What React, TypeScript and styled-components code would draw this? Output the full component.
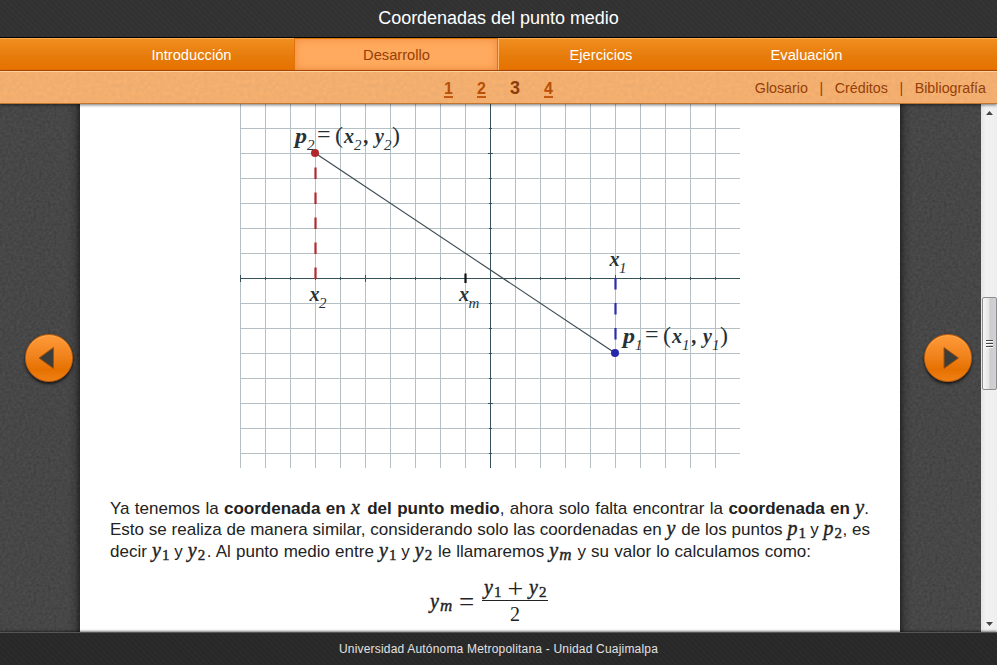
import React from 'react';
import styled, { createGlobalStyle } from 'styled-components';

const grain = (dark: string, freq: number, alpha: number) =>
  `url("data:image/svg+xml,${encodeURIComponent(
    `<svg xmlns='http://www.w3.org/2000/svg' width='128' height='128'><filter id='n' x='0' y='0' width='1' height='1' color-interpolation-filters='sRGB'><feTurbulence type='fractalNoise' baseFrequency='${freq}' numOctaves='2' stitchTiles='stitch'/><feColorMatrix values='0 0 0 0 ${dark} 0 0 0 0 ${dark} 0 0 0 0 ${dark} ${alpha} 0 0 0 0'/></filter><rect width='128' height='128' filter='url(#n)'/></svg>`,
  ).replace(/'/g, '%27').replace(/\(/g, '%28').replace(/\)/g, '%29')}")`;

const GlobalStyle = createGlobalStyle`
  * { box-sizing: border-box; }
  body { margin: 0; overflow: hidden; font-family: "Liberation Sans", Arial, sans-serif; }
`;

const Page = styled.div`
  display: grid;
  grid-template-rows: 38px 33px 33px 528px 33px;
  width: 997px;
  height: 665px;
  overflow: hidden;
`;

const Header = styled.header`
  display: flex;
  align-items: center;
  justify-content: center;
  padding-bottom: 1px;
  border-bottom: 1px solid #000;
  background: repeating-linear-gradient(45deg, #313131 0 2px, #343434 2px 4px);
  color: #fff;
`;

const Title = styled.h1`
  margin: 0;
  font-size: 18px;
  font-weight: 400;
  line-height: 20px;
  letter-spacing: -0.02px;
  white-space: nowrap;
`;

const Nav = styled.nav`
  display: grid;
  grid-template-columns: 206px 204px 205px 206px;
  justify-content: center;
  padding-right: 1px;
  border-top: 1px solid #ffab55;
  border-bottom: 1px solid #b94e05;
  background: linear-gradient(#f18e20, #e67c0b 55%, #e77200);
`;

const Tab = styled.a<{ $active?: boolean }>`
  display: flex;
  align-items: center;
  justify-content: center;
  padding: 1px 0 0 2px;
  font-size: 14.7px;
  color: ${(p) => (p.$active ? '#964006' : '#fff')};
  ${(p) =>
    p.$active &&
    `margin-top: -1px; border: 1px solid #df7408; border-bottom: 0;
     background: #ffaa5e; box-shadow: inset 0 0 8px #ed8a3d, 1px 0 0 #ffb872;`}
`;

const SubNav = styled.div`
  display: grid;
  grid-template-columns: 1fr auto 1fr;
  align-items: center;
  border-top: 1px solid #ffd19f;
  border-bottom: 1px solid #c17630;
  background: ${grain('0.4', 0.25, 0.14)}, #fdb470;
  position: relative;
  z-index: 2;
  box-shadow: 0 1px 3px rgba(0, 0, 0, 0.55);
`;

const Pager = styled.div`
  grid-column: 2;
  display: flex;
  align-items: baseline;
  gap: 24px;
  padding: 1px 0 0 0;
  font-weight: 700;
`;

const PageLink = styled.span<{ $current?: boolean }>`
  width: ${(p) => (p.$current ? '10px' : '9px')};
  font-size: ${(p) => (p.$current ? '18px' : '16px')};
  line-height: ${(p) => (p.$current ? '20px' : '15px')};
  color: ${(p) => (p.$current ? '#8c3c06' : '#b94e05')};
  border-bottom: ${(p) => (p.$current ? '0' : '2px solid #c35810')};
`;

const Links = styled.div`
  grid-column: 3;
  display: flex;
  justify-content: flex-end;
  gap: 11.6px;
  padding-right: 11px;
  font-size: 14.25px;
  color: #963f06;
`;

const Body = styled.main`
  display: grid;
  grid-template-columns: 80px 820px 81px 16px;
  min-height: 0;
  background: ${grain('0.1', 0.35, 0.4)}, #525252;
`;

const Side = styled.div<{ $right?: boolean }>`
  display: flex;
  justify-content: flex-start;
  padding-top: 230px;
  padding-left: ${(p) => (p.$right ? '24px' : '25px')};
  background: linear-gradient(${(p) => (p.$right ? 'to right' : 'to left')}, rgba(0, 0, 0, 0.45), rgba(0, 0, 0, 0.12) 5px, transparent 12px);
`;

const RoundButton = styled.button`
  width: 48px;
  height: 48px;
  padding: 0;
  border: 1px solid #bf5b08;
  border-radius: 50%;
  background: linear-gradient(#ff9a3a, #ef8119 50%, #e67100 75%, #f08015);
  box-shadow: 0 2px 3px rgba(0, 0, 0, 0.7), inset 0 1px 1px #ffac50;
  svg { display: block; }
`;

const Sheet = styled.article`
  display: flex;
  flex-direction: column;
  height: 528px;
  overflow: hidden;
  background: #fff;
  color: #222;
`;

const Graph = styled.svg`
  display: block;
  flex: none;
  margin-left: 160px;
  overflow: visible;
  text {
    font-family: "Liberation Serif", "Times New Roman", serif;
    font-style: italic;
    fill: #263238;
  }
`;

const Prose = styled.div`
  margin: 30px 0 0 30px;
  font-size: 17px;
`;

const Line = styled.p<{ $w: number; $h: number }>`
  width: ${(p) => p.$w}px;
  height: ${(p) => p.$h}px;
  margin: 0;
  line-height: 21px;
  text-align: justify;
  text-align-last: justify;
  white-space: nowrap;
`;

const MathText = styled.span<{ $w: number }>`
  display: inline-block;
  width: ${(p) => p.$w}px;
  line-height: 18px;
  font-family: "Liberation Serif", "Times New Roman", serif;
  font-size: 20px;
  font-style: italic;
  font-weight: 400;
  text-align: left;
  text-align-last: left;
  -webkit-text-stroke: 0.4px #222;
`;

const Sub = styled.span<{ $letter?: boolean }>`
  position: relative;
  top: 3px;
  margin-left: 1px;
  font-size: ${(p) => (p.$letter ? '17px' : '15px')};
  font-style: ${(p) => (p.$letter ? 'italic' : 'normal')};
`;

const Formula = styled.div`
  display: flex;
  align-items: center;
  margin: 15px 0 0 350px;
  font: italic 21px/22px "Liberation Serif", "Times New Roman", serif;
`;

const Equals = styled.span`
  width: 23px;
  font-size: 27px;
  font-style: normal;
`;

const Fraction = styled.div`
  display: flex;
  flex-direction: column;
  align-items: center;
  width: 66px;
`;

const Numerator = styled.div`
  display: flex;
  justify-content: space-between;
  width: 66px;
  height: 23px;
  margin-bottom: 2px;
  padding: 0 1px 0 2px;
  border-bottom: 1px solid #222;
`;

const Upright = styled.span<{ $size: number }>`
  font-style: normal;
  font-size: ${(p) => p.$size}px;
`;

const ScrollBar = styled.div`
  display: flex;
  flex-direction: column;
  align-items: center;
  padding: 7px 0 6px 0;
  background: linear-gradient(to right, #e4e4e4, #f2f2f2 5px, #eee);
  svg { display: block; margin-left: 1px; }
  svg:last-child { margin-top: auto; }
`;

const Thumb = styled.div`
  display: flex;
  flex-direction: column;
  align-items: center;
  justify-content: center;
  gap: 1px;
  align-self: flex-end;
  width: 15px;
  height: 93px;
  margin-top: 182px;
  border: 1px solid #8e8e8e;
  border-radius: 2px;
  background: linear-gradient(to right, #f6f6f6, #e4e4e4 48%, #cbcbd0 52%, #d2d2d5);
`;

const Grip = styled.i`
  width: 7px;
  height: 2px;
  border-top: 1px solid #444;
  border-bottom: 1px solid #fff;
`;

const Footer = styled.footer`
  display: flex;
  align-items: center;
  justify-content: center;
  position: relative;
  z-index: 2;
  border-top: 1px solid #555;
  background: repeating-linear-gradient(45deg, #282828 0 2px, #2b2b2b 2px 4px);
  box-shadow: 0 -1px 2px rgba(0, 0, 0, 0.5);
  color: #e2e2e2;
  font-size: 12px;
  letter-spacing: 0.19px;
`;

const V = ({ v, s, w }: { v: string; s?: string; w: number }) => (
  <MathText $w={w}>
    {v}
    {s && <Sub $letter={s === 'm'}>{s}</Sub>}
  </MathText>
);

const columns = Array.from({ length: 20 }, (_, i) => i * 25 + 0.5);
const rows = Array.from({ length: 14 }, (_, i) => 24.5 + i * 25);

const upright = { fontStyle: 'normal' };

const Pair = ({ x, y, n }: { x: number; y: number; n: string }) => (
  <g transform={`translate(${x} ${y})`} fontSize="21">
    <text x="1" fontWeight="700" fontSize="20" textLength="12" lengthAdjust="spacingAndGlyphs">p</text>
    <text x="13" y="7" fontSize="15">{n}</text>
    <text x="23" y="-1" style={upright} fontSize="24">=</text>
    <text x="41" y="0" style={upright} fontSize="24">(</text>
    <text x="50" fontWeight="700" fontSize="20">x</text>
    <text x="60" y="7" fontSize="15">{n}</text>
    <text x="70" fontWeight="700">,</text>
    <text x="81" fontWeight="700" fontSize="20">y</text>
    <text x="90" y="7" fontSize="15">{n}</text>
    <text x="98" y="0" style={upright} fontSize="24">)</text>
  </g>
);

const AxisLabel = ({ x, y, sub }: { x: number; y: number; sub: string }) => (
  <g transform={`translate(${x} ${y})`}>
    <text fontWeight="700" fontSize="20">x</text>
    <text x="9.5" y="7" fontSize="15">{sub}</text>
  </g>
);

const Plot = () => (
  <Graph width="500" height="364" viewBox="0 0 500 364">
    <g stroke="#b4c0c4" strokeWidth="1">
      {columns.map((x) => <line key={x} x1={x} x2={x} y1="0" y2="364" />)}
      {rows.map((y) => <line key={y} x1="0" x2="500" y1={y} y2={y} />)}
    </g>
    <g stroke="#37525b" strokeWidth="1">
      <line x1="0" x2="500" y1="174.5" y2="174.5" />
      <line x1="250.5" x2="250.5" y1="0" y2="364" />
      {columns.map((x, i) => {
        const h = i % 5 === 0 ? 3 : 1;
        return <line key={x} x1={x} x2={x} y1={174 - h} y2={175 + h} />;
      })}
      {rows.map((y, i) => {
        const h = i % 5 === 1 ? 2 : 1;
        return <line key={y} x1={250 - h} x2={251 + h} y1={y} y2={y} />;
      })}
    </g>
    <line x1="75" y1="49" x2="375" y2="249" stroke="#3b4a50" strokeWidth="1.1" />
    <g strokeWidth="2.2">
      <line x1="75.5" y1="63.5" x2="75.5" y2="175" stroke="#b02b2f" strokeDasharray="11.5 13.5" />
      <line x1="375.5" y1="174" x2="375.5" y2="236" stroke="#2d2dac" strokeDasharray="11.5 13.5" />
      <line x1="225.5" y1="169.5" x2="225.5" y2="179" stroke="#111" />
    </g>
    <circle cx="75" cy="49" r="4" fill="#b0282c" />
    <circle cx="375" cy="249" r="4" fill="#2727ad" />
    <Pair x={54} y={39} n="2" />
    <Pair x={382} y={239} n="1" />
    <AxisLabel x={69.5} y={197} sub="2" />
    <AxisLabel x={219} y={197} sub="m" />
    <AxisLabel x={369.5} y={162} sub="1" />
  </Graph>
);

export default function App() {
  return (
    <>
      <GlobalStyle />
      <Page>
        <Header><Title>Coordenadas del punto medio</Title></Header>
        <Nav>
          <Tab>Introducción</Tab>
          <Tab $active>Desarrollo</Tab>
          <Tab>Ejercicios</Tab>
          <Tab>Evaluación</Tab>
        </Nav>
        <SubNav>
          <Pager>
            <PageLink>1</PageLink>
            <PageLink>2</PageLink>
            <PageLink $current>3</PageLink>
            <PageLink>4</PageLink>
          </Pager>
          <Links>
            <span>Glosario</span><span>|</span><span>Créditos</span><span>|</span><span>Bibliografía</span>
          </Links>
        </SubNav>
        <Body>
          <Side>
            <RoundButton aria-label="Anterior">
              <svg width="46" height="46" viewBox="0 0 46 46"><path d="M13 23 L27.5 12.5 V33.5 Z" fill="#3c3c38" stroke="#a8510a" strokeWidth="1" /></svg>
            </RoundButton>
          </Side>
          <Sheet>
            <Plot />
            <Prose>
              <Line $w={759} $h={21}>
                Ya tenemos la <b>coordenada en <V v="x" w={11} /> del punto medio</b>, ahora solo falta encontrar la <b>coordenada en</b> <V v="y" w={9} />.
              </Line>
              <Line $w={760} $h={22}>
                Esto se realiza de manera similar, considerando solo las coordenadas en <V v="y" w={10} /> de los puntos <V v="p" s="1" w={18} /> y <V v="p" s="2" w={19} />, es
              </Line>
              <Line $w={701} $h={22}>
                decir <V v="y" s="1" w={17} /> y <V v="y" s="2" w={19} />. Al punto medio entre <V v="y" s="1" w={17} /> y <V v="y" s="2" w={18} /> le llamaremos <V v="y" s="m" w={23} /> y su valor lo calculamos como:
              </Line>
            </Prose>
            <Formula>
              <V v="y" s="m" w={29} />
              <Equals>=</Equals>
              <Fraction>
                <Numerator>
                  <V v="y" s="1" w={18} />
                  <Upright $size={28}>+</Upright>
                  <V v="y" s="2" w={18} />
                </Numerator>
                <Upright $size={20}>2</Upright>
              </Fraction>
            </Formula>
          </Sheet>
          <Side $right>
            <RoundButton aria-label="Siguiente">
              <svg width="46" height="46" viewBox="0 0 46 46"><path d="M33.5 23 L19 12.5 V33.5 Z" fill="#3c3c38" stroke="#a8510a" strokeWidth="1" /></svg>
            </RoundButton>
          </Side>
          <ScrollBar>
            <svg width="7" height="4" viewBox="0 0 7 4"><path d="M0 4 L3.5 0 L7 4Z" fill="#444" /></svg>
            <Thumb><Grip /><Grip /><Grip /></Thumb>
            <svg width="7" height="4" viewBox="0 0 7 4"><path d="M0 0 L3.5 4 L7 0Z" fill="#444" /></svg>
          </ScrollBar>
        </Body>
        <Footer>Universidad Autónoma Metropolitana - Unidad Cuajimalpa</Footer>
      </Page>
    </>
  );
}
